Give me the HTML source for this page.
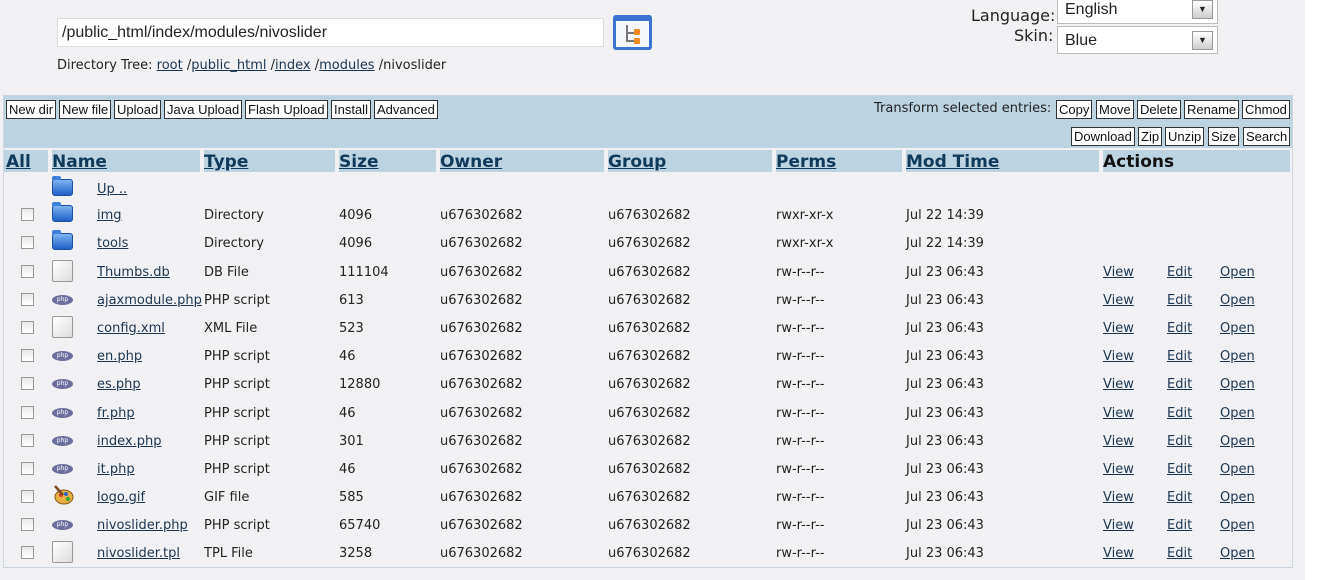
<!DOCTYPE html>
<html><head><meta charset="utf-8"><style>
*{margin:0;padding:0;box-sizing:border-box}
body{width:1321px;height:580px;background:#fff;position:relative;overflow:hidden;font-family:"DejaVu Sans","Liberation Sans",sans-serif;font-size:13px;color:#222}
#bg{position:absolute;left:0;top:0;width:1305px;height:580px;background:#f1f1f3}
.a{position:absolute;white-space:nowrap}
a{color:#1a3550;text-decoration:underline}
.btn{position:absolute;top:0;height:19px;border:1px solid #333;background:#fff;font-family:"Liberation Sans",sans-serif;font-size:13px;line-height:17px;padding:0 2px;color:#111;white-space:nowrap}
.hd{position:absolute;top:150px;height:22px;background:#bcd3e2;font-weight:bold;font-size:17px;line-height:25px}
.hd a{color:#0f3a5a}
.row{position:absolute;left:0;width:1300px;height:20px}
.row span,.row a{position:absolute;top:0;line-height:20px}
.cb{position:absolute;left:21px;top:2px;width:13px;height:13px;border:1px solid #999;background:linear-gradient(#e8e8e8,#fff)}
.fold{position:absolute;left:52px;top:-1px;width:21px;height:17px;border-radius:3px;background:linear-gradient(#7db4f0,#1f5fc8);border:1px solid #1c4fa0}
.fold:before{content:"";position:absolute;left:-1px;top:-4px;width:9px;height:4px;background:#3e7fdc;border-radius:2px 2px 0 0}
.file{position:absolute;left:52px;top:-3px;width:21px;height:22px;border:1px solid #999;border-radius:2px;background:linear-gradient(135deg,#fff,#ddd)}
.php{position:absolute;left:52px;top:4px;width:21px;height:10px;border-radius:50%;background:#6c6f9e;font-size:6px;color:#fff;text-align:center;line-height:10px}
</style></head><body>
<div id="bg"></div>
<div class="a" style="left:57px;top:18px;width:547px;height:29px;background:#fff;border:1px solid #ddd;font-family:'Liberation Sans',sans-serif;font-size:16px;line-height:27px;padding-left:4px">/public_html/index/modules/nivoslider</div>
<svg class="a" style="left:612px;top:14px" width="41" height="37" viewBox="0 0 41 37"><rect x="1" y="1" width="39" height="35" rx="3" fill="#3a73d0"/><rect x="4" y="7" width="33" height="26" fill="#f4f6fa"/><path d="M15 11v16h9M15 19h9" stroke="#777" stroke-width="2" fill="none"/><rect x="22" y="15" width="6" height="6" rx="1" fill="#f08a20"/><rect x="22" y="24" width="6" height="6" rx="1" fill="#f08a20"/></svg>
<div class="a" style="left:57px;top:58px">Directory Tree: <a>root</a> /<a>public_html</a> /<a>index</a> /<a>modules</a> /nivoslider</div>
<div class="a" style="left:971px;top:6px;font-size:16px">Language:</div>
<div class="a" style="left:1014px;top:26px;font-size:16px">Skin:</div>
<div class="a" style="left:1057px;top:-3px;width:161px;height:27px;background:#fff;border:1px solid #bbb;font-family:'Liberation Sans',sans-serif;font-size:16px;line-height:24px;padding-left:7px">English<div style="position:absolute;right:4px;top:2px;width:21px;height:19px;border:1px solid #999;background:linear-gradient(#fff,#ccc);font-size:9px;text-align:center;line-height:17px">▼</div></div>
<div class="a" style="left:1057px;top:26px;width:161px;height:28px;background:#fff;border:1px solid #bbb;font-family:'Liberation Sans',sans-serif;font-size:16px;line-height:28px;padding-left:7px">Blue<div style="position:absolute;right:4px;top:4px;width:21px;height:19px;border:1px solid #999;background:linear-gradient(#fff,#ccc);font-size:9px;text-align:center;line-height:17px">▼</div></div>
<div class="a" style="left:3px;top:95px;width:1290px;height:473px;border:1px solid #c9d6e2"></div>
<div class="a" style="left:4px;top:96px;width:1288px;height:52px;background:#bcd3e2"></div>
<div class="a" style="left:0;top:100px;height:20px;width:1300px">
<div class="btn" style="left:6px">New dir</div><div class="btn" style="left:59px">New file</div><div class="btn" style="left:114px">Upload</div><div class="btn" style="left:164px">Java Upload</div><div class="btn" style="left:245px">Flash Upload</div><div class="btn" style="left:331px">Install</div><div class="btn" style="left:374px">Advanced</div>
<div class="a" style="left:874px;top:1px">Transform selected entries:</div>
<div class="btn" style="left:1056px">Copy</div><div class="btn" style="left:1096px">Move</div><div class="btn" style="left:1137px">Delete</div><div class="btn" style="left:1184px">Rename</div><div class="btn" style="left:1242px">Chmod</div>
</div>
<div class="a" style="left:0;top:127px;height:20px;width:1300px">
<div class="btn" style="left:1071px">Download</div><div class="btn" style="left:1138px">Zip</div><div class="btn" style="left:1165px">Unzip</div><div class="btn" style="left:1208px">Size</div><div class="btn" style="left:1243px">Search</div>
</div>
<div class="hd" style="left:4px;width:44px;padding-left:2px"><a>All</a></div>
<div class="hd" style="left:52px;width:148px"><a>Name</a></div>
<div class="hd" style="left:204px;width:131px"><a>Type</a></div>
<div class="hd" style="left:339px;width:97px"><a>Size</a></div>
<div class="hd" style="left:440px;width:164px"><a>Owner</a></div>
<div class="hd" style="left:608px;width:164px"><a>Group</a></div>
<div class="hd" style="left:776px;width:126px"><a>Perms</a></div>
<div class="hd" style="left:906px;width:193px"><a>Mod Time</a></div>
<div class="hd" style="left:1103px;width:187px;color:#111">Actions</div>

<div class="row" style="top:180px"><div class="fold"></div><a style="left:97px">Up ..</a></div>
<div class="row" style="top:206px"><div class="cb"></div><div class="fold"></div><a style="left:97px">img</a><span style="left:204px">Directory</span><span style="left:339px">4096</span><span style="left:440px">u676302682</span><span style="left:608px">u676302682</span><span style="left:776px">rwxr-xr-x</span><span style="left:906px">Jul 22 14:39</span></div>
<div class="row" style="top:234px"><div class="cb"></div><div class="fold"></div><a style="left:97px">tools</a><span style="left:204px">Directory</span><span style="left:339px">4096</span><span style="left:440px">u676302682</span><span style="left:608px">u676302682</span><span style="left:776px">rwxr-xr-x</span><span style="left:906px">Jul 22 14:39</span></div>
<div class="row" style="top:263px"><div class="cb"></div><div class="file"></div><a style="left:97px">Thumbs.db</a><span style="left:204px">DB File</span><span style="left:339px">111104</span><span style="left:440px">u676302682</span><span style="left:608px">u676302682</span><span style="left:776px">rw-r--r--</span><span style="left:906px">Jul 23 06:43</span><a style="left:1103px">View</a><a style="left:1167px">Edit</a><a style="left:1220px">Open</a></div>
<div class="row" style="top:291px"><div class="cb"></div><div class="php">php</div><a style="left:97px">ajaxmodule.php</a><span style="left:204px">PHP script</span><span style="left:339px">613</span><span style="left:440px">u676302682</span><span style="left:608px">u676302682</span><span style="left:776px">rw-r--r--</span><span style="left:906px">Jul 23 06:43</span><a style="left:1103px">View</a><a style="left:1167px">Edit</a><a style="left:1220px">Open</a></div>
<div class="row" style="top:319px"><div class="cb"></div><div class="file"></div><a style="left:97px">config.xml</a><span style="left:204px">XML File</span><span style="left:339px">523</span><span style="left:440px">u676302682</span><span style="left:608px">u676302682</span><span style="left:776px">rw-r--r--</span><span style="left:906px">Jul 23 06:43</span><a style="left:1103px">View</a><a style="left:1167px">Edit</a><a style="left:1220px">Open</a></div>
<div class="row" style="top:347px"><div class="cb"></div><div class="php">php</div><a style="left:97px">en.php</a><span style="left:204px">PHP script</span><span style="left:339px">46</span><span style="left:440px">u676302682</span><span style="left:608px">u676302682</span><span style="left:776px">rw-r--r--</span><span style="left:906px">Jul 23 06:43</span><a style="left:1103px">View</a><a style="left:1167px">Edit</a><a style="left:1220px">Open</a></div>
<div class="row" style="top:375px"><div class="cb"></div><div class="php">php</div><a style="left:97px">es.php</a><span style="left:204px">PHP script</span><span style="left:339px">12880</span><span style="left:440px">u676302682</span><span style="left:608px">u676302682</span><span style="left:776px">rw-r--r--</span><span style="left:906px">Jul 23 06:43</span><a style="left:1103px">View</a><a style="left:1167px">Edit</a><a style="left:1220px">Open</a></div>
<div class="row" style="top:404px"><div class="cb"></div><div class="php">php</div><a style="left:97px">fr.php</a><span style="left:204px">PHP script</span><span style="left:339px">46</span><span style="left:440px">u676302682</span><span style="left:608px">u676302682</span><span style="left:776px">rw-r--r--</span><span style="left:906px">Jul 23 06:43</span><a style="left:1103px">View</a><a style="left:1167px">Edit</a><a style="left:1220px">Open</a></div>
<div class="row" style="top:432px"><div class="cb"></div><div class="php">php</div><a style="left:97px">index.php</a><span style="left:204px">PHP script</span><span style="left:339px">301</span><span style="left:440px">u676302682</span><span style="left:608px">u676302682</span><span style="left:776px">rw-r--r--</span><span style="left:906px">Jul 23 06:43</span><a style="left:1103px">View</a><a style="left:1167px">Edit</a><a style="left:1220px">Open</a></div>
<div class="row" style="top:460px"><div class="cb"></div><div class="php">php</div><a style="left:97px">it.php</a><span style="left:204px">PHP script</span><span style="left:339px">46</span><span style="left:440px">u676302682</span><span style="left:608px">u676302682</span><span style="left:776px">rw-r--r--</span><span style="left:906px">Jul 23 06:43</span><a style="left:1103px">View</a><a style="left:1167px">Edit</a><a style="left:1220px">Open</a></div>
<div class="row" style="top:488px"><div class="cb"></div><svg style="position:absolute;left:52px;top:-4px" width="22" height="22" viewBox="0 0 22 22"><ellipse cx="12" cy="13" rx="9" ry="7" fill="#e8b040" stroke="#8a5a20"/><circle cx="9" cy="11" r="2" fill="#d33"/><circle cx="14" cy="10" r="2" fill="#36c"/><circle cx="16" cy="15" r="2" fill="#3a3"/><path d="M3 2l8 9" stroke="#7a4a20" stroke-width="2.5"/></svg><a style="left:97px">logo.gif</a><span style="left:204px">GIF file</span><span style="left:339px">585</span><span style="left:440px">u676302682</span><span style="left:608px">u676302682</span><span style="left:776px">rw-r--r--</span><span style="left:906px">Jul 23 06:43</span><a style="left:1103px">View</a><a style="left:1167px">Edit</a><a style="left:1220px">Open</a></div>
<div class="row" style="top:516px"><div class="cb"></div><div class="php">php</div><a style="left:97px">nivoslider.php</a><span style="left:204px">PHP script</span><span style="left:339px">65740</span><span style="left:440px">u676302682</span><span style="left:608px">u676302682</span><span style="left:776px">rw-r--r--</span><span style="left:906px">Jul 23 06:43</span><a style="left:1103px">View</a><a style="left:1167px">Edit</a><a style="left:1220px">Open</a></div>
<div class="row" style="top:544px"><div class="cb"></div><div class="file"></div><a style="left:97px">nivoslider.tpl</a><span style="left:204px">TPL File</span><span style="left:339px">3258</span><span style="left:440px">u676302682</span><span style="left:608px">u676302682</span><span style="left:776px">rw-r--r--</span><span style="left:906px">Jul 23 06:43</span><a style="left:1103px">View</a><a style="left:1167px">Edit</a><a style="left:1220px">Open</a></div>
</body></html>
